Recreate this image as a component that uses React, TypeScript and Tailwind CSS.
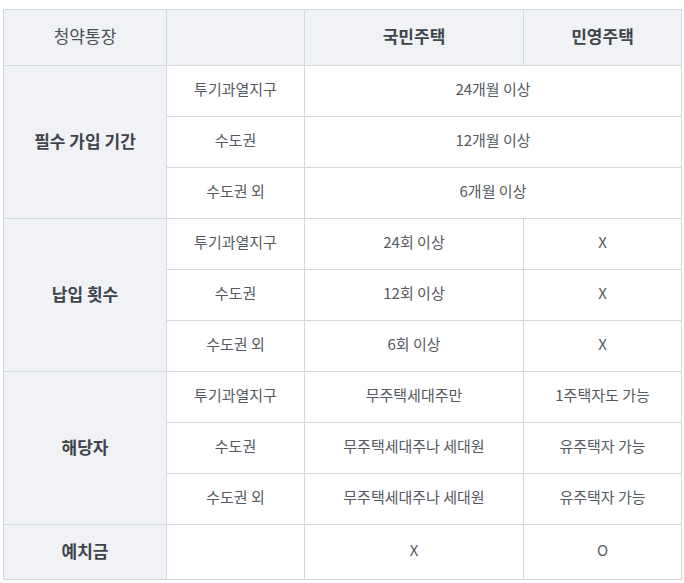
const font = { fontFamily: '"Noto Sans CJK KR", "Noto Sans", sans-serif' };

type Row = { group?: string; span?: number; area: string; national: string; private?: string; tall?: boolean };

const rows: Row[] = [
  { group: "필수 가입 기간", span: 3, area: "투기과열지구", national: "24개월 이상" },
  { area: "수도권", national: "12개월 이상" },
  { area: "수도권 외", national: "6개월 이상" },
  { group: "납입 횟수", span: 3, area: "투기과열지구", national: "24회 이상", private: "X" },
  { area: "수도권", national: "12회 이상", private: "X" },
  { area: "수도권 외", national: "6회 이상", private: "X" },
  { group: "해당자", span: 3, area: "투기과열지구", national: "무주택세대주만", private: "1주택자도 가능" },
  { area: "수도권", national: "무주택세대주나 세대원", private: "유주택자 가능" },
  { area: "수도권 외", national: "무주택세대주나 세대원", private: "유주택자 가능" },
  { group: "예치금", span: 1, area: "", national: "X", private: "O", tall: true },
];

const cell = "border border-[#d2d8e0] p-0 pb-[3px]";

export default function App() {
  return (
    <div className="bg-white w-[684px] h-[583px] pt-[9px] pl-[3px]" style={font}>
      <table className="border-collapse table-fixed w-[678px] text-center">
        <colgroup>
          <col className="w-[163px]" />
          <col className="w-[138px]" />
          <col className="w-[219px]" />
          <col className="w-[158px]" />
        </colgroup>
        <thead>
          <tr className="h-[56px] bg-[#f0f2f6]">
            <th className={`${cell} text-[17px] font-normal text-[#4a4f57]`}>청약통장</th>
            <th className={cell}></th>
            <th className={`${cell} text-[17px] font-bold text-[#3f444c]`}>국민주택</th>
            <th className={`${cell} text-[17px] font-bold text-[#3f444c]`}>민영주택</th>
          </tr>
        </thead>
        <tbody className="text-[15px] text-[#555a62]">
          {rows.map((r, i) => (
            <tr key={i} className={r.tall ? "h-[55px]" : "h-[51px]"}>
              {r.group && (
                <td
                  rowSpan={r.span}
                  className={`${cell} bg-[#f0f2f6] text-[17px] font-bold text-[#3f444c]`}
                >
                  {r.group}
                </td>
              )}
              <td className={cell}>{r.area}</td>
              {r.private === undefined ? (
                <td colSpan={2} className={cell}>{r.national}</td>
              ) : (
                <>
                  <td className={cell}>{r.national}</td>
                  <td className={cell}>{r.private}</td>
                </>
              )}
            </tr>
          ))}
        </tbody>
      </table>
    </div>
  );
}
